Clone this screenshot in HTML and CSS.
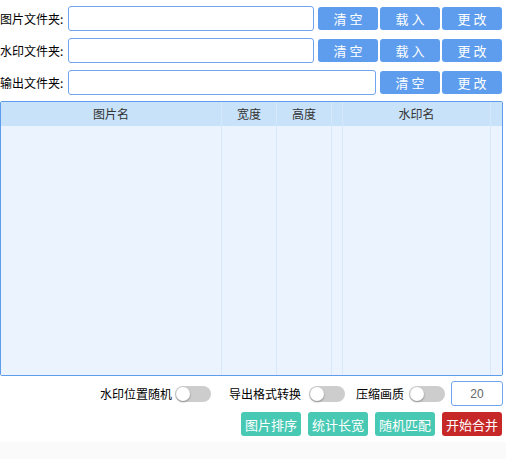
FILE: index.html
```html
<!DOCTYPE html>
<html>

<head>
    <meta charset="utf-8">
    <title>图片水印合并</title>
    <link rel="stylesheet" href="styles.css">
</head>

<body>
    <div class="main">
        <div class="folder-row">
            <label>图片文件夹:</label>
            <input type="text" class="path">
            <button class="btn blue">清空</button>
            <button class="btn blue">载入</button>
            <button class="btn blue">更改</button>
        </div>
        <div class="folder-row">
            <label>水印文件夹:</label>
            <input type="text" class="path">
            <button class="btn blue">清空</button>
            <button class="btn blue">载入</button>
            <button class="btn blue">更改</button>
        </div>
        <div class="folder-row">
            <label>输出文件夹:</label>
            <input type="text" class="path">
            <button class="btn blue">清空</button>
            <button class="btn blue">更改</button>
        </div>

        <div class="list">
            <div class="list-head">
                <div class="cell">图片名</div>
                <div class="cell">宽度</div>
                <div class="cell">高度</div>
                <div class="cell"></div>
                <div class="cell">水印名</div>
                <div class="cell"></div>
            </div>
            <div class="list-body">
                <div class="cell"></div>
                <div class="cell"></div>
                <div class="cell"></div>
                <div class="cell"></div>
                <div class="cell"></div>
                <div class="cell"></div>
            </div>
        </div>

        <div class="options">
            <span class="opt opt-random">水印位置随机</span>
            <span class="switch"><i></i></span>
            <span class="opt opt-format">导出格式转换</span>
            <span class="switch"><i></i></span>
            <span class="opt opt-quality">压缩画质</span>
            <span class="switch"><i></i></span>
            <input type="text" class="quality" value="20">
        </div>

        <div class="actions">
            <button class="btn green">图片排序</button>
            <button class="btn green">统计长宽</button>
            <button class="btn green">随机匹配</button>
            <button class="btn red">开始合并</button>
        </div>
    </div>
    <div class="footer"></div>
</body>

</html>
```

FILE: styles.css
```css
* {
    margin: 0;
    padding: 0;
    box-sizing: border-box;
}

body {
    font-family: "Noto Sans CJK SC", "Liberation Sans", sans-serif;
    font-size: 12px;
    color: #000;
    background: #fff;
}

.main {
    padding: 6px 4px 0 0;
}

.folder-row {
    display: flex;
    align-items: center;
    height: 25px;
    margin-bottom: 7px;
}

.folder-row label {
    width: 66px;
    margin-right: 2px;
    white-space: nowrap;
    line-height: 25px;
}

.path {
    flex: 1;
    height: 25px;
    margin-right: 4px;
    border: 1px solid #6fa5ee;
    border-radius: 3px;
    outline: none;
}

.btn {
    width: 60px;
    height: 23px;
    border: none;
    border-radius: 3px;
    color: #fff;
    font-family: "Noto Sans CJK SC", sans-serif;
    font-size: 13px;
    cursor: pointer;
}

.folder-row .btn {
    margin-right: 2px;
    letter-spacing: 3px;
    text-indent: 3px;
}

.folder-row .btn:last-child {
    margin-right: 0;
}

.blue {
    background: #5e9ded;
}

.green {
    background: #48c9b4;
}

.red {
    background: #c62828;
}

.list {
    margin-top: -1px;
    margin-right: -1px;
    height: 275px;
    border: 1px solid #5e9ded;
    border-radius: 2px;
    display: flex;
    flex-direction: column;
    overflow: hidden;
}

.list-head,
.list-body {
    display: grid;
    grid-template-columns: 221px 55px 55px 11px 148px 1fr;
}

.list-head {
    height: 24px;
    background: #c8e2fa;
    color: #333;
    line-height: 24px;
    text-align: center;
}

.list-body {
    flex: 1;
    background: #eaf3fe;
}

.cell {
    border-right: 1px solid #d8e8fb;
}

.cell:last-child {
    border-right: none;
}

.options {
    display: flex;
    align-items: center;
    justify-content: flex-end;
    height: 25px;
    margin-top: 5px;
    margin-right: -1px;
}

.opt {
    line-height: 25px;
    white-space: nowrap;
}

.opt-random {
    margin-right: 3px;
}

.opt-format {
    margin-left: 18px;
    margin-right: 8px;
}

.opt-quality {
    margin-left: 11px;
    margin-right: 5px;
}

.switch {
    width: 36px;
    height: 16px;
    border-radius: 8px;
    background: #cdcdcd;
    position: relative;
}

.switch i {
    position: absolute;
    left: 1px;
    top: 1px;
    width: 14px;
    height: 14px;
    border-radius: 50%;
    background: #fff;
    box-shadow: 0 1px 2px rgba(0, 0, 0, .35);
}

.quality {
    width: 52px;
    height: 25px;
    margin-left: 6px;
    border: 1px solid #6fa5ee;
    border-radius: 3px;
    text-align: center;
    color: #666;
    font-size: 12px;
    outline: none;
}

.actions {
    display: flex;
    justify-content: flex-end;
    gap: 7px;
    margin-top: 6px;
}

.actions .btn {
    height: 24px;
    font-size: 13px;
}

.footer {
    margin-top: 6px;
    height: 20px;
    background: #fafafa;
}
```
